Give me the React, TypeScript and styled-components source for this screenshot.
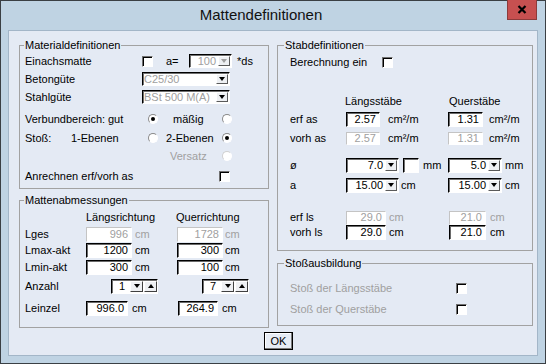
import React from 'react';
import styled, { createGlobalStyle } from 'styled-components';

const GlobalStyle = createGlobalStyle`
  html, body {
    margin: 0;
    padding: 0;
    background: #ffffff;
  }
  body {
    font-family: "Liberation Sans", Arial, sans-serif;
    font-size: 11px;
    color: #000;
  }
  * {
    box-sizing: border-box;
  }
`;

const Window = styled.div`
  width: 546px;
  height: 364px;
  border: 1px solid #3a3f44;
  background: #bfd3e3;
  padding: 0 7px 7px;
  display: flex;
  flex-direction: column;
`;

const TitleBar = styled.div`
  height: 29px;
  display: flex;
  align-items: flex-start;
  flex: none;
`;

const Title = styled.div`
  flex: 1;
  text-align: center;
  padding-left: 7px;
  font-size: 15px;
  line-height: 28px;
  color: #111;
`;

const CloseButton = styled.div`
  width: 30px;
  height: 20px;
  margin-right: 1px;
  margin-top: -1px;
  background: #c75050;
  border: 1px solid #8c3b3b;
  border-top: none;
  display: flex;
  align-items: center;
  justify-content: center;
`;

const Client = styled.div`
  flex: 1;
  background: #e4eaf4;
  border: 1px solid #a3b6c8;
  padding: 8px 4px 0 10px;
  display: flex;
  flex-direction: column;
`;

const Columns = styled.div`
  display: grid;
  grid-template-columns: 250px 256px;
  column-gap: 8px;
  align-items: start;
`;

const Column = styled.div<{ $gap: number }>`
  display: flex;
  flex-direction: column;
  gap: ${(p) => p.$gap}px;
`;

const Group = styled.fieldset<{ $h: number }>`
  margin: 0;
  padding: 0;
  min-width: 0;
  height: ${(p) => p.$h}px;
  border: 1px solid #a2a2a2;
`;

const Legend = styled.legend<{ $ml: number }>`
  margin-left: ${(p) => p.$ml}px;
  padding: 0 1px;
  font-size: 11px;
  line-height: 13px;
`;

const Body = styled.div<{ $pl: number }>`
  padding-left: ${(p) => p.$pl}px;
  display: flex;
  flex-direction: column;
`;

const Row = styled.div<{ $mt?: number; $h?: number }>`
  display: flex;
  align-items: center;
  height: ${(p) => p.$h ?? 16}px;
  margin-top: ${(p) => p.$mt ?? 0}px;
  white-space: nowrap;
`;

const Txt = styled.span<{ $w?: number; $ml?: number; $pl?: number; $dis?: boolean }>`
  display: inline-block;
  flex: none;
  width: ${(p) => (p.$w ? `${p.$w}px` : 'auto')};
  margin-left: ${(p) => p.$ml ?? 0}px;
  padding-left: ${(p) => p.$pl ?? 0}px;
  color: ${(p) => (p.$dis ? '#a0a0a0' : '#000')};
  line-height: 13px;
`;

const Check = styled.span`
  flex: none;
  width: 11px;
  height: 11px;
  background: #fff;
  border: 1px solid;
  border-color: #707070 #ffffff #ffffff #707070;
  box-shadow: inset 1px 1px 0 #000;
`;

const Radio = styled.span<{ $on?: boolean; $dis?: boolean }>`
  flex: none;
  width: 10px;
  height: 10px;
  border-radius: 50%;
  background: #fff;
  border: 1px solid;
  border-color: ${(p) => (p.$dis ? '#d0d0d0 #fff #fff #d0d0d0' : '#8a8a8a #fff #fff #8a8a8a')};
  display: flex;
  align-items: center;
  justify-content: center;

  &::after {
    content: '';
    width: 4px;
    height: 4px;
    border-radius: 50%;
    background: ${(p) => (p.$on ? '#000' : 'transparent')};
  }
`;

const Edit = styled.span<{ $w: number; $h?: number; $dis?: boolean }>`
  flex: none;
  display: flex;
  align-items: center;
  justify-content: flex-end;
  width: ${(p) => p.$w}px;
  height: ${(p) => p.$h ?? 15}px;
  padding-right: 3px;
  background: #fff;
  border: 1px solid;
  border-color: ${(p) => (p.$dis ? '#c4c4c4 #fff #fff #c4c4c4' : '#000 #fff #fff #000')};
  box-shadow: ${(p) => (p.$dis ? 'none' : 'inset 1px 1px 0 #6a6a6a')};
  color: ${(p) => (p.$dis ? '#a0a0a0' : '#000')};
  line-height: 13px;
`;

const Combo = styled.span<{ $w: number; $h?: number }>`
  flex: none;
  display: flex;
  align-items: center;
  width: ${(p) => p.$w}px;
  height: ${(p) => p.$h ?? 15}px;
  background: #fff;
  border: 1px solid;
  border-color: #000 #fff #fff #000;
  box-shadow: inset 1px 1px 0 #707070;
`;

const ComboText = styled.span<{ $left?: boolean; $dis?: boolean }>`
  flex: 1;
  text-align: ${(p) => (p.$left ? 'left' : 'right')};
  padding: ${(p) => (p.$left ? '0 0 0 1px' : '0 2px 0 0')};
  color: ${(p) => (p.$dis ? '#a0a0a0' : '#000')};
  line-height: 13px;
  overflow: hidden;
`;

const ArrowBtn = styled.span<{ $w?: number }>`
  flex: none;
  align-self: stretch;
  width: ${(p) => p.$w ?? 12}px;
  margin: 1px 1px 1px 0;
  background: #eef0f3;
  border: 1px solid;
  border-color: #ffffff #5a5a5a #5a5a5a #ffffff;
  display: flex;
  align-items: center;
  justify-content: center;
`;

const Tri = styled.span<{ $up?: boolean; $dis?: boolean }>`
  width: 0;
  height: 0;
  border-left: 3px solid transparent;
  border-right: 3px solid transparent;
  ${(p) =>
    p.$up
      ? `border-bottom: 4px solid ${p.$dis ? '#a0a0a0' : '#000'};`
      : `border-top: 4px solid ${p.$dis ? '#a0a0a0' : '#000'};`}
`;

const Spin = styled.span<{ $ml?: number }>`
  flex: none;
  display: flex;
  width: 47px;
  height: 15px;
  margin-left: ${(p) => p.$ml ?? 0}px;
  background: #fff;
  border: 1px solid;
  border-color: #000 #fff #fff #000;
  box-shadow: inset 1px 1px 0 #707070;
`;

const SpinText = styled.span`
  width: 17px;
  flex: none;
  text-align: right;
  padding-right: 4px;
  line-height: 13px;
`;

const SpinBtn = styled.span`
  flex: 1;
  margin: 1px 0 1px 1px;
  background: #eef0f3;
  border: 1px solid;
  border-color: #ffffff #404040 #404040 #ffffff;
  display: flex;
  align-items: center;
  justify-content: center;
`;

const Box = styled.span<{ $w: number; $ml?: number }>`
  flex: none;
  width: ${(p) => p.$w}px;
  height: 15px;
  margin-left: ${(p) => p.$ml ?? 0}px;
  background: #fff;
  border: 1px solid;
  border-color: #000 #fff #fff #000;
  box-shadow: inset 1px 1px 0 #707070;
`;

const ButtonRow = styled.div`
  display: flex;
  justify-content: center;
  padding-left: 5px;
  margin-top: 4px;
`;

const OkButton = styled.button`
  width: 29px;
  height: 18px;
  padding: 0;
  font-family: "Liberation Sans", Arial, sans-serif;
  font-size: 11px;
  line-height: 14px;
  color: #000;
  background: #e6ecf5;
  border: 1px solid #000;
  box-shadow: inset -1px -1px 0 #7a7a7a, inset 1px 1px 0 #ffffff;
`;

function Dropdown({ w, h, value, left, dis, arrowDis }: { w: number; h?: number; value: string; left?: boolean; dis?: boolean; arrowDis?: boolean }) {
  return (
    <Combo $w={w} $h={h}>
      <ComboText $left={left} $dis={dis}>{value}</ComboText>
      <ArrowBtn>
        <Tri $dis={arrowDis} />
      </ArrowBtn>
    </Combo>
  );
}

function Spinner({ value, ml }: { value: string; ml?: number }) {
  return (
    <Spin $ml={ml}>
      <SpinText>{value}</SpinText>
      <SpinBtn>
        <Tri />
      </SpinBtn>
      <SpinBtn>
        <Tri $up />
      </SpinBtn>
    </Spin>
  );
}

export default function App() {
  return (
    <>
      <GlobalStyle />
      <Window>
        <TitleBar>
          <Title>Mattendefinitionen</Title>
          <CloseButton>
            <svg width="10" height="9" viewBox="0 0 10 9">
              <path d="M1.5 1 L8.5 8 M8.5 1 L1.5 8" stroke="#000" strokeWidth="2.2" />
            </svg>
          </CloseButton>
        </TitleBar>

        <Client>
          <Columns>
            <Column $gap={5}>
              <Group $h={150}>
                <Legend $ml={4}>Materialdefinitionen</Legend>
                <Body $pl={5}>
                  <Row $mt={1}>
                    <Txt $w={117}>Einachsmatte</Txt>
                    <Check />
                    <Txt $w={23} $ml={13}>a=</Txt>
                    <Dropdown w={43} h={14} value="100" dis arrowDis />
                    <Txt $ml={5}>*ds</Txt>
                  </Row>
                  <Row $mt={2}>
                    <Txt $w={117}>Betongüte</Txt>
                    <Dropdown w={88} h={14} value="C25/30" left dis />
                  </Row>
                  <Row $mt={2}>
                    <Txt $w={117}>Stahlgüte</Txt>
                    <Dropdown w={88} h={14} value="BSt 500 M(A)" left dis />
                  </Row>
                  <Row $mt={6}>
                    <Txt $w={83}>Verbundbereich:</Txt>
                    <Txt $w={40}>gut</Txt>
                    <Radio $on />
                    <Txt $w={49} $ml={15}>mäßig</Txt>
                    <Radio />
                  </Row>
                  <Row $mt={3}>
                    <Txt $w={46}>Stoß:</Txt>
                    <Txt $w={77}>1-Ebenen</Txt>
                    <Radio />
                    <Txt $w={56} $ml={8}>2-Ebenen</Txt>
                    <Radio $on />
                  </Row>
                  <Row $mt={2}>
                    <Txt $w={145} />
                    <Txt $w={52} $dis>Versatz</Txt>
                    <Radio $dis />
                  </Row>
                  <Row $mt={4}>
                    <Txt $w={194}>Anrechnen erf/vorh as</Txt>
                    <Check />
                  </Row>
                </Body>
              </Group>

              <Group $h={134}>
                <Legend $ml={4}>Mattenabmessungen</Legend>
                <Body $pl={5}>
                  <Row $mt={2}>
                    <Txt $w={61} />
                    <Txt $w={90}>Längsrichtung</Txt>
                    <Txt>Querrichtung</Txt>
                  </Row>
                  <Row $mt={1}>
                    <Txt $w={61}>Lges</Txt>
                    <Edit $w={46} $dis>996</Edit>
                    <Txt $w={45} $pl={3} $dis>cm</Txt>
                    <Edit $w={46} $dis>1728</Edit>
                    <Txt $pl={2} $dis>cm</Txt>
                  </Row>
                  <Row>
                    <Txt $w={61}>Lmax-akt</Txt>
                    <Edit $w={46}>1200</Edit>
                    <Txt $w={45} $pl={3}>cm</Txt>
                    <Edit $w={46}>300</Edit>
                    <Txt $pl={2}>cm</Txt>
                  </Row>
                  <Row $mt={1}>
                    <Txt $w={61}>Lmin-akt</Txt>
                    <Edit $w={46}>300</Edit>
                    <Txt $w={45} $pl={3}>cm</Txt>
                    <Edit $w={46}>100</Edit>
                    <Txt $pl={2}>cm</Txt>
                  </Row>
                  <Row $mt={3}>
                    <Txt $w={86}>Anzahl</Txt>
                    <Spinner value="1" />
                    <Spinner value="7" ml={44} />
                  </Row>
                  <Row $mt={6}>
                    <Txt $w={61}>Leinzel</Txt>
                    <Edit $w={42}>996.0</Edit>
                    <Txt $w={50} $pl={4}>cm</Txt>
                    <Edit $w={40}>264.9</Edit>
                    <Txt $pl={4}>cm</Txt>
                  </Row>
                </Body>
              </Group>
            </Column>

            <Column $gap={6}>
              <Group $h={212}>
                <Legend $ml={6}>Stabdefinitionen</Legend>
                <Body $pl={12}>
                  <Row $mt={2}>
                    <Txt $w={92}>Berechnung ein</Txt>
                    <Check />
                  </Row>
                  <Row $mt={23}>
                    <Txt $w={55} />
                    <Txt $w={104}>Längsstäbe</Txt>
                    <Txt>Querstäbe</Txt>
                  </Row>
                  <Row $mt={2}>
                    <Txt $w={56}>erf as</Txt>
                    <Edit $w={34}>2.57</Edit>
                    <Txt $w={68} $pl={8}>cm²/m</Txt>
                    <Edit $w={35}>1.31</Edit>
                    <Txt $pl={6}>cm²/m</Txt>
                  </Row>
                  <Row $mt={3}>
                    <Txt $w={56}>vorh as</Txt>
                    <Edit $w={34} $h={13} $dis>2.57</Edit>
                    <Txt $w={68} $pl={8}>cm²/m</Txt>
                    <Edit $w={35} $h={13} $dis>1.31</Edit>
                    <Txt $pl={6}>cm²/m</Txt>
                  </Row>
                  <Row $mt={11}>
                    <Txt $w={56}>ø</Txt>
                    <Dropdown w={53} value="7.0" />
                    <Box $w={16} $ml={4} />
                    <Txt $w={29} $pl={4}>mm</Txt>
                    <Dropdown w={54} value="5.0" />
                    <Txt $pl={3}>mm</Txt>
                  </Row>
                  <Row $mt={4}>
                    <Txt $w={56}>a</Txt>
                    <Dropdown w={53} value="15.00" />
                    <Txt $w={49} $pl={2}>cm</Txt>
                    <Dropdown w={54} value="15.00" />
                    <Txt $pl={3}>cm</Txt>
                  </Row>
                  <Row $mt={17} $h={15}>
                    <Txt $w={56}>erf ls</Txt>
                    <Edit $w={40} $h={14} $dis>29.0</Edit>
                    <Txt $w={63} $pl={3} $dis>cm</Txt>
                    <Edit $w={37} $h={14} $dis>21.0</Edit>
                    <Txt $pl={4} $dis>cm</Txt>
                  </Row>
                  <Row $h={15}>
                    <Txt $w={56}>vorh ls</Txt>
                    <Edit $w={40}>29.0</Edit>
                    <Txt $w={63} $pl={3}>cm</Txt>
                    <Edit $w={37}>21.0</Edit>
                    <Txt $pl={4}>cm</Txt>
                  </Row>
                </Body>
              </Group>

              <Group $h={69}>
                <Legend $ml={6}>Stoßausbildung</Legend>
                <Body $pl={12}>
                  <Row $mt={10}>
                    <Txt $w={166} $dis>Stoß der Längsstäbe</Txt>
                    <Check />
                  </Row>
                  <Row $mt={5}>
                    <Txt $w={166} $dis>Stoß der Querstäbe</Txt>
                    <Check />
                  </Row>
                </Body>
              </Group>
            </Column>
          </Columns>

          <ButtonRow>
            <OkButton>OK</OkButton>
          </ButtonRow>
        </Client>
      </Window>
    </>
  );
}
